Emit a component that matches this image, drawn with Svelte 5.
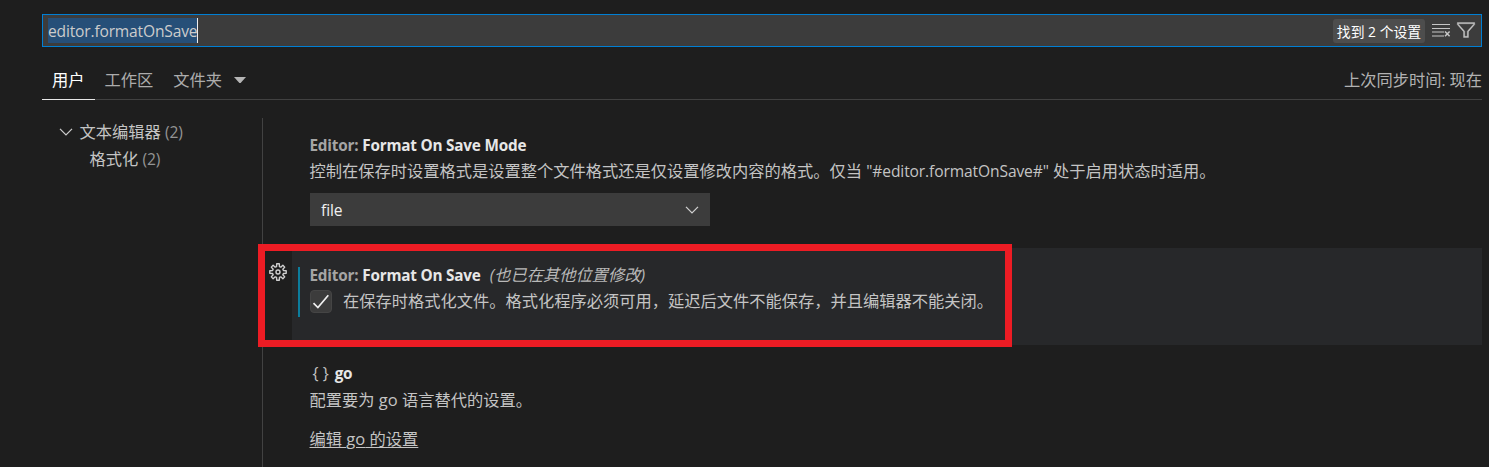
<script>
  const query = 'editor.formatOnSave';
  const tabs = ['用户', '工作区', '文件夹'];
  let active = $state(0);

  // Outline of an eight-toothed cog centred on (10, 10).
  const point = (radius, degrees) => {
    const a = (degrees * Math.PI) / 180;
    return `${(10 + radius * Math.sin(a)).toFixed(2)} ${(10 - radius * Math.cos(a)).toFixed(2)}`;
  };
  const gear =
    'M' +
    Array.from({ length: 8 }, (_, i) => i * 45)
      .map((a) => [point(5.6, a - 15), point(8.3, a - 9), point(8.3, a + 9), point(5.6, a + 15)].join('L'))
      .join('L') +
    'Z';
</script>

<div class="settings">
  <header>
    <div class="search">
      <div class="query"><span class="la w-query">{query}</span></div>
      <div class="tools">
        <span class="count">找到 <span class="num">2</span> 个设置</span>
        <svg class="clear" width="20" height="20" viewBox="0 0 20 20" fill="#c5c5c5">
          <path d="M1 2.9h18v1.2H1zM1 6.9h18v1.2H1zM1 10.4h12v1.2H1zM1 14.4h12v1.2H1z" />
          <path d="M14 10.5l4.6 4.8M18.6 10.5L14 15.3" stroke="#c5c5c5" stroke-width="1.5" />
        </svg>
        <svg class="filter" width="20" height="20" viewBox="0 0 16 16" fill="#c5c5c5" stroke="#c5c5c5" stroke-width=".25">
          <path d="M15 2v1.67L10 9.3V14H6V9.3L1 3.67V2h14zm-8 7v4h2V9l5-5.7V3H2v.3L7 9z" />
        </svg>
      </div>
    </div>
    <nav>
      {#each tabs as tab, i}
        <button class:active={i === active} onclick={() => (active = i)}>{tab}</button>
      {/each}
      <svg class="caret" width="12" height="6" viewBox="0 0 12 6"><path d="M0 0h12L6.6 6H5.4z" fill="#b5b5b5" /></svg>
      <span class="sync">上次同步时间<span class="la colon">:</span>现在</span>
    </nav>
  </header>

  <main>
    <aside>
      <div class="toc top">
        <svg width="14" height="8" viewBox="0 0 14 8" fill="none" stroke="#cccccc" stroke-width="1.3"><path d="M1 .9l6 6 6-6" /></svg>
        <span>文本编辑器 <i class="la">(2)</i></span>
      </div>
      <div class="toc child"><span>格式化 <i class="la">(2)</i></span></div>
    </aside>

    <section class="list">
      <article class="mode">
        <h3><span class="cat">Editor:</span> <span class="name">Format On Save Mode</span></h3>
        <p>控制在保存时设置格式是设置整个文件格式还是仅设置修改内容的格式。仅当 <span class="la hash">"#editor.formatOnSave#"</span> 处于启用状态时适用。</p>
        <div class="select">
          <span class="la">file</span>
          <svg width="14" height="8" viewBox="0 0 14 8" fill="none" stroke="#d0d0d0" stroke-width="1.3"><path d="M1 .9l6 6 6-6" /></svg>
        </div>
      </article>

      <article class="save">
        <svg class="gear" width="20" height="20" viewBox="0 0 20 20" fill="none" stroke="#cfcfcf" stroke-width="1.4" stroke-linejoin="round">
          <path d={gear} />
          <circle cx="10" cy="10" r="2" />
        </svg>
        <div class="row">
          <div class="modified">
            <h3><span class="cat">Editor:</span> <span class="name">Format On Save</span><em>(也已在其他位置修改)</em></h3>
            <div class="check">
              <span class="box"><svg width="18" height="16" viewBox="0 0 18 16" fill="none" stroke="#f0f0f0" stroke-width="1.7"><path d="M1.5 9.2l4.4 4.3L16.3 1.2" /></svg></span>
              <p>在保存时格式化文件。格式化程序必须可用，延迟后文件不能保存，并且编辑器不能关闭。</p>
            </div>
          </div>
        </div>
      </article>

      <article class="go">
        <h3><span class="braces">{'{ }'}</span><span class="name">go</span></h3>
        <p>配置要为 <span class="la go-word">go</span> 语言替代的设置。</p>
        <a href="#go">编辑 <span class="la go-word">go</span> 的设置</a>
      </article>
    </section>
  </main>
  <div class="highlight"></div>
</div>

<style>
  :global(body) { background: #1e1e1e; overflow: hidden; }
  .settings {
    position: relative; box-sizing: border-box; width: 1489px; height: 467px;
    padding: 14px 7px 0 42px; overflow: hidden; display: flex; flex-direction: column;
    background: #1e1e1e; color: #c4c4c4;
    font: 16.25px/26px "Open Sans", "Noto Sans CJK SC", sans-serif;
    white-space: nowrap;
  }
  .la { font-size: 15.6px; letter-spacing: -0.1px; }
  .w-query { letter-spacing: -0.18px; }
  .hash { letter-spacing: -0.12px; }
  .search {
    box-sizing: border-box; height: 33px; border: 1px solid #007fd4; background: #3c3c3c;
    display: flex; align-items: center; justify-content: space-between; padding: 0 5px;
  }
  .query { height: 25px; line-height: 26px; background: #264f78; border-right: 1px solid #eee; width: 149px; color: #cccccc; }
  .tools { display: flex; align-items: center; }
  .count { box-sizing: border-box; width: 92px; height: 24px; border-radius: 3px; background: #4d4d4d; color: #fff; font-size: 13.85px; line-height: 25px; text-align: center; }
  .clear { margin-left: 6px; }
  .filter { margin-left: 5px; margin-bottom: 2px; }
  nav { box-sizing: border-box; height: 53px; padding-top: 17px; display: flex; border-bottom: 1px solid #414141; }
  button {
    height: 36px; padding: 0 10px 4px; border: 0; border-bottom: 1px solid transparent; background: none;
    font: inherit; line-height: 32px; color: #acacac; box-sizing: border-box;
  }
  button.active { color: #fff; border-color: #e7e7e7; }
  .caret { margin: 13px 0 0 2px; }
  .sync { margin-left: auto; line-height: 32px; color: #b2b2b2; }
  .colon { margin-right: 4px; }
  main { flex: 1; display: flex; padding-top: 18px; }
  aside { box-sizing: border-box; width: 221px; border-right: 1px solid #424242; }
  .toc { height: 27px; line-height: 28px; display: flex; align-items: center; gap: 6.5px; }
  .toc i { font-style: normal; color: #949494; }
  .top { padding-left: 17px; }
  .child { padding-left: 47.5px; }
  .list { flex: 1; display: flex; flex-direction: column; }
  h3 { margin: 0; font-size: 15.3px; line-height: 26px; font-weight: 700; letter-spacing: -0.2px; }
  p { margin: 0; }
  .cat { color: #a5a5a5; }
  .name { color: #e7e7e7; }
  .mode { box-sizing: border-box; height: 130px; padding: 14px 0 0 46.5px; }
  .select { box-sizing: border-box; margin: 9px 0 0 .5px; width: 400px; height: 33px; padding: 0 11px; background: #3c3c3c; color: #f0f0f0; display: flex; align-items: center; justify-content: space-between; }
  .save { display: flex; height: 97px; }
  .gear { margin: 14px 3px 0 5px; }
  .row { flex: 1; background: #27282a; margin-left: 1px; padding: 19px 0 0 6px; }
  .modified { box-sizing: border-box; height: 50px; border-left: 2px solid #0c7d9d; padding-left: 9.5px; }
  .modified h3 { line-height: 16px; height: 21px; }
  em { font-weight: 400; font-size: 16.25px; margin-left: 9px; letter-spacing: 0; color: #b8b8b8; }
  .check { display: flex; gap: 11px; }
  .box { box-sizing: border-box; width: 22px; height: 23px; margin: 2px 0 0 .5px; border: 1px solid #454545; border-radius: 4px; background: #3c3c3c; display: grid; place-items: center; }
  .go { padding: 15px 0 0 46.5px; }
  .braces { font-weight: 400; font-size: 16px; letter-spacing: 0; color: #c4c4c4; margin: 0 6px 0 3px; }
  .go p { height: 39px; line-height: 28px; }
  .go-word { font-size: 16.5px; letter-spacing: 0.1px; }
  a { display: inline-block; line-height: 28px; color: #c4c4c4; text-decoration: underline; text-underline-offset: 2px; }
  .highlight { position: absolute; left: 258px; top: 244px; width: 754px; height: 103px; box-sizing: border-box; border: 7px solid #ed1c24; }
</style>
